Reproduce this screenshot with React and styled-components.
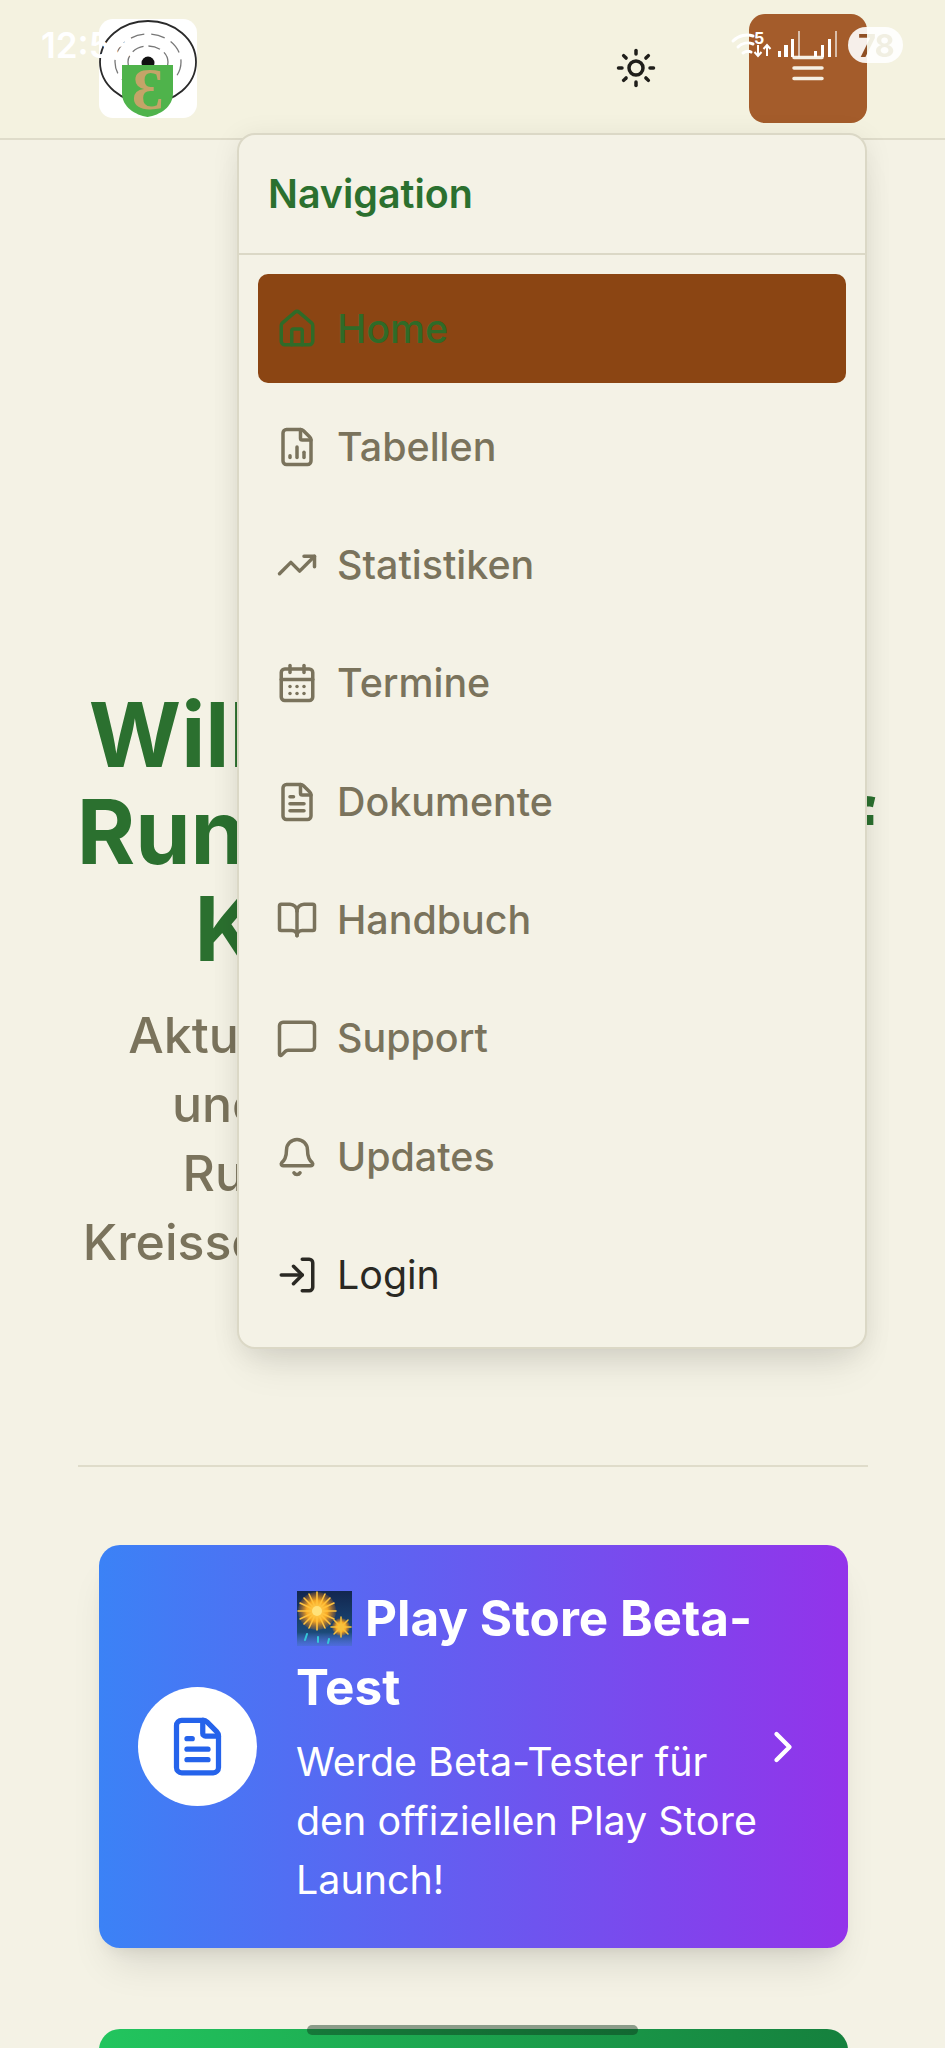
import React from "react";
import styled, { createGlobalStyle } from "styled-components";
import { House, FileChartColumn, TrendingUp, CalendarDays, FileText, BookOpen, MessageSquare, Bell, LogIn, Sun, ChevronRight } from "lucide-react";

const Global = createGlobalStyle`
  html, body { margin: 0; padding: 0; background: #f4f2e5; }
  * { box-sizing: border-box; }
  body { font-family: Inter, "Noto Sans", sans-serif; }
`;

const Page = styled.div`
  position: relative;
  width: 945px;
  height: 2048px;
  overflow: hidden;
  background: #f4f2e5;
`;

const Header = styled.header`
  height: 140px;
  border-bottom: 2px solid #dfdcca;
  background: #f4f2e0;
  display: flex;
  align-items: center;
  justify-content: space-between;
  padding: 0 78px 2px 99px;
`;

const LogoBox = styled.div`
  width: 98px;
  height: 99px;
  margin-top: 1px;
  border-radius: 14px;
  background: #fff;
  overflow: visible;
`;

const HeaderRight = styled.div`
  display: flex;
  align-items: center;
  gap: 92px;
`;

const ThemeIcon = styled(Sun)`
  width: 42px;
  height: 42px;
  color: #1f1e1a;
  stroke-width: 2;
`;

const MenuButton = styled.div`
  width: 118px;
  height: 109px;
  border-radius: 16px;
  background: #a45c2b;
  display: flex;
  align-items: center;
  justify-content: center;
`;

const Main = styled.main`
  padding-top: 546px;
`;

const Hero = styled.section`
  text-align: center;
`;

const Title = styled.h1`
  margin: 0;
  padding-left: 8px;
  font-size: 89px;
  line-height: 97px;
  font-weight: 700;
  color: #2b702f;
  white-space: nowrap;
`;

const Lead = styled.p`
  margin: 24px 0 0;
  font-size: 50px;
  line-height: 69px;
  font-weight: 500;
  color: #7a735c;
  white-space: nowrap;
`;

const Rule = styled.hr`
  margin: 188px 77px 0 78px;
  border: 0;
  border-top: 2px solid #dfdcca;
`;

const Cards = styled.div`
  margin: 78px 97px 0 99px;
  display: flex;
  flex-direction: column;
  gap: 81px;
`;

const Card = styled.article`
  height: ${(p) => p.$height}px;
  border-radius: 21px;
  background: linear-gradient(90deg, ${(p) => p.$from}, ${(p) => p.$to});
  box-shadow: 0 26px 40px -13px rgba(0, 0, 0, 0.12), 0 10px 16px -8px rgba(0, 0, 0, 0.08);
  padding: 0 39px;
  display: flex;
  align-items: center;
  color: #fff;
`;

const CardBadge = styled.div`
  flex: none;
  width: 119px;
  height: 119px;
  margin-right: 39px;
  border-radius: 50%;
  background: #fff;
  color: #2563eb;
  display: flex;
  align-items: center;
  justify-content: center;
`;

const CardBody = styled.div`
  flex: 1;
  min-width: 0;
  margin-right: -12px;
`;

const CardTitle = styled.h2`
  margin: 0;
  font-size: 49.4px;
  line-height: 69px;
  font-weight: 700;
`;

const Burst = styled.svg`
  width: 55px;
  height: 55px;
  vertical-align: -10px;
  margin: 0 13px 0 1px;
`;

const CardText = styled.p`
  margin: 11px 0 0;
  font-size: 39.4px;
  line-height: 59px;
`;

const CardArrow = styled(ChevronRight)`
  flex: none;
  width: 52px;
  height: 52px;
`;

const Dropdown = styled.nav`
  position: absolute;
  left: 237px;
  top: 133px;
  width: 630px;
  height: 1216px;
  border: 2px solid #dbd8c6;
  border-radius: 18px;
  background: #f4f2e6;
  box-shadow: 0 26px 40px -13px rgba(0, 0, 0, 0.1), 0 4px 28px rgba(0, 0, 0, 0.08);
`;

const DropdownHead = styled.div`
  height: 120px;
  padding: 0 0 0 29px;
  display: flex;
  align-items: center;
  border-bottom: 2px solid #dbd8c6;
  font-size: 39.4px;
  font-weight: 600;
  color: #2b702f;
`;

const NavList = styled.ul`
  list-style: none;
  margin: 0;
  padding: 19px 19px 0;
  display: flex;
  flex-direction: column;
  gap: 9.3px;
`;

const NavItem = styled.li`
  height: 109px;
  padding-left: 18px;
  border-radius: 10px;
  display: flex;
  align-items: center;
  gap: 19px;
  font-size: 39.4px;
  font-weight: ${(p) => (p.$strong ? 400 : 500)};
  background: ${(p) => (p.$active ? "#8b4513" : "transparent")};
  color: ${(p) => (p.$active ? "#2f6b28" : p.$strong ? "#2a2923" : "#7a735c")};
  svg { width: 42px; height: 42px; flex: none; }
`;

const StatusBar = styled.div`
  position: absolute;
  left: 0;
  top: 0;
  width: 100%;
  height: 90px;
  pointer-events: none;
`;

const Clock = styled.span`
  position: absolute;
  left: 41px;
  top: 24px;
  font-size: 35px;
  line-height: 42px;
  font-weight: 600;
  color: #fff;
`;

const Radios = styled.svg`
  position: absolute;
  left: 730px;
  top: 28px;
  width: 112px;
  height: 32px;
`;

const RadioLabel = styled.span`
  position: absolute;
  left: 754px;
  top: 30px;
  font-size: 16px;
  line-height: 16px;
  font-weight: 700;
  color: #fff;
`;

const Battery = styled.div`
  position: absolute;
  left: 848px;
  top: 27px;
  width: 55px;
  height: 36px;
  padding-left: 10px;
  border-radius: 18px;
  background: rgba(255, 255, 255, 0.9);
  display: flex;
  align-items: center;
  font-size: 31px;
  font-weight: 700;
  letter-spacing: -1px;
`;

const BatteryDigits = styled.span`
  background: linear-gradient(90deg, #8f4f24 9px, #f1efe2 9px);
  -webkit-background-clip: text;
  background-clip: text;
  color: transparent;
`;

const HomeHandle = styled.div`
  position: absolute;
  left: 307px;
  top: 2025px;
  width: 331px;
  height: 10px;
  border-radius: 5px;
  background: rgba(10, 50, 25, 0.45);
`;

const Logo = () => (
  <svg viewBox="0 0 98 99" width="98" height="99">
    <ellipse cx="49" cy="43" rx="48" ry="41" fill="none" stroke="#2a2a2a" strokeWidth="1.8" />
    <ellipse cx="49" cy="43" rx="33" ry="28" fill="none" stroke="#777" strokeWidth="1.3" strokeDasharray="14 7" />
    <ellipse cx="49" cy="43" rx="20" ry="16" fill="none" stroke="#777" strokeWidth="1.3" strokeDasharray="12 5" />
    <circle cx="49" cy="44" r="6.5" fill="#111" />
    <path d="M23 46 H74 V74 C74 88 61 96 48.500 98 C36 96 23 88 23 74 Z" fill="#4fb34b" />
    <text x="48.500" y="90" textAnchor="middle" fontFamily="'Liberation Serif', serif" fontWeight="700" fontSize="60" fill="#c4a468">Ɛ</text>
  </svg>
);

const Hamburger = () => (
  <svg width="42" height="42" viewBox="0 0 24 24" fill="none" stroke="#f6f0e4" strokeWidth="2" strokeLinecap="round">
    <path d="M4 6h16M4 12h16M4 18h16" />
  </svg>
);

const Fireworks = () => (
  <Burst viewBox="0 0 55 55">
    <defs>
      <linearGradient id="sky" x1="0" y1="0" x2="0" y2="1">
        <stop offset="0" stopColor="#12264f" />
        <stop offset="0.75" stopColor="#1b4a78" />
        <stop offset="1" stopColor="#3a6fa8" stopOpacity="0.3" />
      </linearGradient>
      <radialGradient id="glow">
        <stop offset="0" stopColor="#ffdf6b" />
        <stop offset="0.55" stopColor="#f7a823" />
        <stop offset="1" stopColor="#e07a12" stopOpacity="0.2" />
      </radialGradient>
    </defs>
    <rect width="55" height="55" fill="url(#sky)" />
    <circle cx="20" cy="20" r="19" fill="url(#glow)" />
    <g stroke="#ffc23d" strokeWidth="1.6" strokeLinecap="round">
      <path d="M20 1v38M1 20h38M7 7l26 26M33 7L7 33M12 3l16 34M28 3L12 37M3 12l34 16M37 12L3 28" />
    </g>
    <circle cx="20" cy="20" r="5" fill="#ffe27a" />
    <circle cx="44" cy="36" r="9" fill="url(#glow)" />
    <g stroke="#f8c13a" strokeWidth="1.500" strokeLinecap="round">
      <path d="M44 26v20M34 36h20M37 29l14 14M51 29L37 43" />
    </g>
    <path d="M10 43l-2 6M21 46l0 5M32 48l-1 4" stroke="#35c6d8" strokeWidth="2" strokeLinecap="round" />
  </Burst>
);

const StatusGlyphs = () => (
  <Radios viewBox="0 0 112 32">
    <g fill="none" stroke="#fff" strokeWidth="3" strokeLinecap="round">
      <path d="M3 13C9 7 17 6 23 8" />
      <path d="M8 19c4-4 10-5 15-3" />
      <path d="M13 25c3-2 6-2 8-1" />
    </g>
    <g stroke="#fff" strokeWidth="2" fill="none">
      <path d="M28 17v11M24.500 24l3.500 4 3.500-4M37 28V17M33.500 21l3.500-4 3.500 4" />
    </g>
    <g fill="#fff">
      <rect x="48" y="23" width="3" height="6" />
      <rect x="54" y="17" width="4" height="12" />
      <rect x="61" y="11" width="3" height="18" />
      <rect x="68" y="3" width="2" height="26" opacity="0.6" />
      <rect x="84" y="23" width="3" height="6" />
      <rect x="91" y="17" width="3" height="12" />
      <rect x="98" y="11" width="3" height="18" />
      <rect x="105" y="3" width="2" height="26" opacity="0.6" />
    </g>
  </Radios>
);

const items = [
  { label: "Home", Icon: House, active: true },
  { label: "Tabellen", Icon: FileChartColumn },
  { label: "Statistiken", Icon: TrendingUp },
  { label: "Termine", Icon: CalendarDays },
  { label: "Dokumente", Icon: FileText },
  { label: "Handbuch", Icon: BookOpen },
  { label: "Support", Icon: MessageSquare },
  { label: "Updates", Icon: Bell },
  { label: "Login", Icon: LogIn, strong: true },
];

export default function App() {
  return (
    <Page>
      <Global />
      <Header>
        <LogoBox><Logo /></LogoBox>
        <HeaderRight>
          <ThemeIcon />
          <MenuButton><Hamburger /></MenuButton>
        </HeaderRight>
      </Header>
      <Main>
        <Hero>
          <Title>Willkommen beim<br />Rundenwettkampf<br />Kreis Krefeld</Title>
          <Lead>Aktuelle Tabellen, Statistiken<br />und Termine aller aktiven<br />Rundenwettkämpfe vom<br />Kreisschützenverband Nordhorn</Lead>
        </Hero>
        <Rule />
        <Cards>
          <Card $height={403} $from="#3b82f6" $to="#9333ea">
            <CardBadge><FileText size={63} /></CardBadge>
            <CardBody>
              <CardTitle><Fireworks />Play Store Beta-Test</CardTitle>
              <CardText>Werde Beta-Tester für den offiziellen Play Store Launch!</CardText>
            </CardBody>
            <CardArrow />
          </Card>
          <Card $height={300} $from="#22c55e" $to="#15803d" />
        </Cards>
      </Main>
      <Dropdown>
        <DropdownHead>Navigation</DropdownHead>
        <NavList>
          {items.map(({ label, Icon, active, strong }) => (
            <NavItem key={label} $active={active} $strong={strong}>
              <Icon />
              {label}
            </NavItem>
          ))}
        </NavList>
      </Dropdown>
      <StatusBar>
        <Clock>12:58</Clock>
        <StatusGlyphs />
        <RadioLabel>5</RadioLabel>
        <Battery><BatteryDigits>78</BatteryDigits></Battery>
      </StatusBar>
      <HomeHandle />
    </Page>
  );
}
